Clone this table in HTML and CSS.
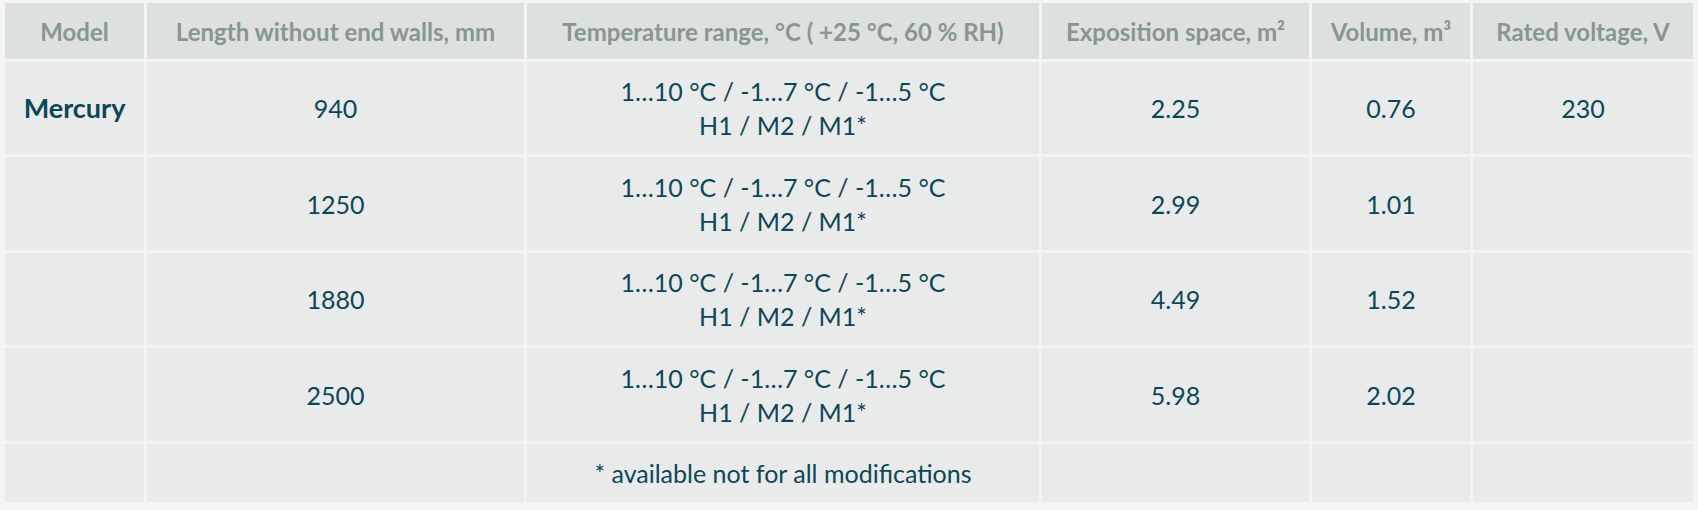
FILE: index.html
```html
<!DOCTYPE html>
<html lang="en">
<head>
<meta charset="utf-8">
<title>Mercury specifications</title>
<link rel="stylesheet" href="styles.css">
</head>
<body>
<div class="wrap">
<table class="spec">
  <colgroup>
    <col class="c-model">
    <col class="c-length">
    <col class="c-temp">
    <col class="c-space">
    <col class="c-volume">
    <col class="c-voltage">
  </colgroup>
  <thead>
    <tr class="head">
      <th>Model</th>
      <th>Length without end walls, mm</th>
      <th>Temperature range, °C ( +25 °C, 60 % RH)</th>
      <th>Exposition space, m²</th>
      <th>Volume, m³</th>
      <th>Rated voltage, V</th>
    </tr>
  </thead>
  <tbody>
    <tr class="r-a">
      <td class="model">Mercury</td>
      <td>940</td>
      <td>1…10 °C / -1…7 °C / -1…5 °C<br>H1 / M2 / M1*</td>
      <td>2.25</td>
      <td>0.76</td>
      <td>230</td>
    </tr>
    <tr class="r-b">
      <td></td>
      <td>1250</td>
      <td>1…10 °C / -1…7 °C / -1…5 °C<br>H1 / M2 / M1*</td>
      <td>2.99</td>
      <td>1.01</td>
      <td></td>
    </tr>
    <tr class="r-a">
      <td></td>
      <td>1880</td>
      <td>1…10 °C / -1…7 °C / -1…5 °C<br>H1 / M2 / M1*</td>
      <td>4.49</td>
      <td>1.52</td>
      <td></td>
    </tr>
    <tr class="r-b">
      <td></td>
      <td>2500</td>
      <td>1…10 °C / -1…7 °C / -1…5 °C<br>H1 / M2 / M1*</td>
      <td>5.98</td>
      <td>2.02</td>
      <td></td>
    </tr>
    <tr class="foot">
      <td></td>
      <td></td>
      <td>* available not for all modifications</td>
      <td></td>
      <td></td>
      <td></td>
    </tr>
  </tbody>
</table>
</div>
</body>
</html>
```

FILE: styles.css
```css
html, body {
  margin: 0;
  padding: 0;
  background: #f4f4f4;
}

.wrap {
  padding: 3px 2px 2px 2px;
}

.spec {
  width: 100%;
  table-layout: fixed;
  border-collapse: separate;
  border-spacing: 3px;
  margin: -3px 0 0 0;
  font-family: "Lato", "Noto Sans", sans-serif;
  color: #0c4757;
}

.c-model { width: 139px; }
.c-length { width: 377px; }
.c-temp { width: 512px; }
.c-space { width: 267px; }
.c-volume { width: 158px; }
.c-voltage { width: 220px; }

.spec th,
.spec td {
  box-sizing: border-box;
  padding: 0;
  text-align: center;
  vertical-align: middle;
}

.spec th {
  background: #dce1df;
  color: #869693;
  font-weight: 700;
  font-size: 24px;
  height: 56px;
  white-space: nowrap;
}

.spec td {
  background: #e9ebea;
  font-size: 25px;
  line-height: 34px;
  font-weight: 400;
}

.r-a td { height: 92px; }
.r-b td { height: 93px; }
.foot td { height: 58px; }

.spec td.model {
  font-weight: 700;
  font-size: 27px;
}
```
